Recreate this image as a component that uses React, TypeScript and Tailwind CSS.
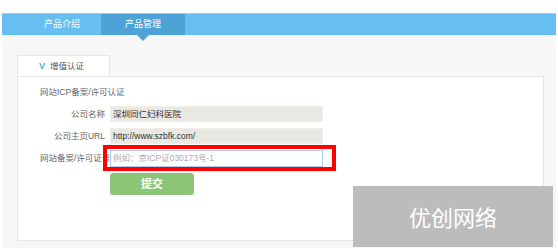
import { Fragment } from 'react'

const font = { fontFamily: '"Liberation Sans", "Noto Sans CJK SC", sans-serif' }

const navTabs = [
  { label: '产品介绍', active: false },
  { label: '产品管理', active: true },
]

const rows = [
  { label: '公司名称', value: '深圳同仁妇科医院' },
  { label: '公司主页URL', value: 'http://www.szbfk.com/' },
]

export default function App() {
  return (
    <div className="relative h-[252px] w-[558px] overflow-hidden bg-white" style={font}>
      <div className="ml-[2px] mt-[13px] flex h-[235px] w-[554px] flex-col bg-[#f7f7f7]">
        <nav className="flex h-[22px] border-t border-[#8fd0f5] bg-[#66bef1]">
          <div className="w-[21px]" />
          {navTabs.map((t) => (
            <div
              key={t.label}
              className={
                t.active
                  ? 'relative flex w-[84px] items-center justify-center bg-[#4da2d6] text-[9px] text-white'
                  : 'flex w-[78px] items-center justify-center text-[9px] text-white'
              }
            >
              {t.label}
              {t.active && (
                <span className="absolute left-1/2 top-full -ml-[6px] h-0 w-0 border-x-[6px] border-t-[6px] border-x-transparent border-t-[#4da2d6]" />
              )}
            </div>
          ))}
        </nav>

        <div className="flex flex-1 flex-col pb-[7px] pl-[15px] pr-[12px] pt-[20px]">
          <div className="flex">
            <div className="-mb-px flex h-[22px] w-[93px] items-center border border-b-0 border-[#e6e6e6] bg-white pl-[21px] text-[8.5px] text-[#555]">
              <span className="mr-[5px] text-[9px] font-bold text-[#4cb3ec]">V</span>
              增值认证
            </div>
          </div>
          <section className="flex-1 border border-[#e6e6e6] bg-white pl-[22px] pt-[9px]">
            <p className="text-[8.5px] leading-[12px] text-[#666]">网站ICP备案/许可认证</p>
            <div className="mt-[8px] grid grid-cols-[68px_213px] items-center gap-x-[2px] gap-y-[6px] text-[8.5px] text-[#666]">
              {rows.map((r) => (
                <Fragment key={r.label}>
                  <span className="pr-[3px] text-right">{r.label}</span>
                  <div className="flex h-[16px] items-center border border-[#efeeea] bg-[#e9e8e2] px-[2px] text-[#333]">
                    {r.value}
                  </div>
                </Fragment>
              ))}
              <span className="whitespace-nowrap text-right">网站备案/许可证号</span>
              <div className="relative h-[17px]">
                <div className="absolute -left-[7px] -right-[13px] -top-[5px] -bottom-[4px] border-[4px] border-[#ff0000]" />
                <div className="relative flex h-full items-center border border-[#a7cdf3] bg-white px-[2px] text-[#aaa]">
                  例如：京ICP证030173号-1
                </div>
              </div>
              <span />
              <button
                type="button"
                className="flex h-[22px] w-[84px] items-center justify-center rounded-[3px] bg-[#8bc575] text-[11px] font-bold text-white"
              >
                提交
              </button>
            </div>
          </section>
        </div>
      </div>

      <div className="absolute left-[353px] top-[186px] flex h-[61px] w-[200px] items-center justify-center bg-[#bcbcbc] text-[22px] text-white" style={{ fontFamily: '"Noto Sans CJK SC", sans-serif' }}>
        优创网络
      </div>
    </div>
  )
}
